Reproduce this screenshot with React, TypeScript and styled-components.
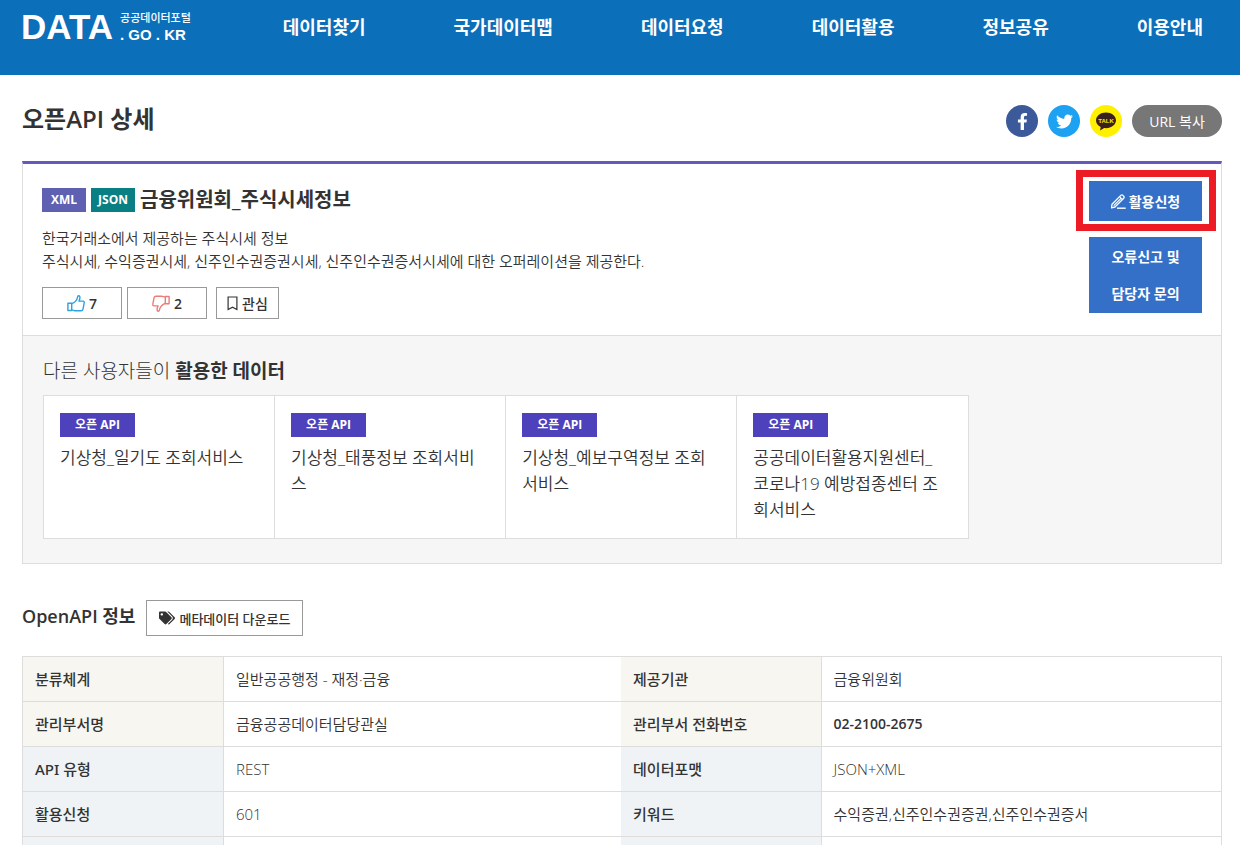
import React from "react";
import styled, { createGlobalStyle } from "styled-components";
import { FaFacebookF, FaTwitter, FaTags } from "react-icons/fa";

const GlobalStyle = createGlobalStyle`
  * { box-sizing: border-box; }
  body {
    margin: 0;
    background: #fff;
    color: #333;
    font-family: "Open Sans", "Noto Sans CJK KR", sans-serif;
    font-size: 15px;
    font-weight: 350;
  }
  h1, h2, h3, p, ul { margin: 0; padding: 0; }
  ul { list-style: none; }
  a { color: inherit; text-decoration: none; }
  button { font-family: inherit; color: inherit; padding: 0; border: 0; cursor: pointer; }
`;

const Page = styled.div`
  height: 100vh;
  overflow: hidden;
`;

const Header = styled.header`
  display: flex;
  justify-content: space-between;
  align-items: flex-start;
  height: 75px;
  padding: 0 37px 0 21px;
  background: #0c6fba;
  color: #fff;
`;

const Logo = styled.a`
  display: flex;
  gap: 7px;
  padding-top: 10px;
  font-family: "Liberation Sans", "Noto Sans CJK KR", sans-serif;
  font-weight: 700;
  white-space: nowrap;
`;

const LogoMark = styled.span`
  font-size: 35px;
  line-height: 34px;
`;

const LogoSide = styled.span`
  display: flex;
  flex-direction: column;
`;

const LogoKorean = styled.span`
  font-size: 11px;
  font-weight: 500;
  line-height: 16px;
`;

const LogoDomain = styled.span`
  font-size: 15px;
  line-height: 17px;
`;

const Nav = styled.nav`
  display: flex;
  gap: 88px;
  font-size: 18px;
  font-weight: 700;
  line-height: 26px;
  padding-top: 14px;
  white-space: nowrap;
`;

const Main = styled.main`
  padding: 0 18px 0 22px;
`;

const TitleBar = styled.div`
  display: flex;
  justify-content: space-between;
  align-items: center;
  height: 86px;
  padding-top: 6px;
`;

const PageTitle = styled.h1`
  font-size: 24px;
  font-weight: 600;
  line-height: 36px;
  padding-bottom: 4px;
`;

const Share = styled.div`
  display: flex;
  gap: 10px;
`;

const ShareButton = styled.button<{ $bg: string }>`
  display: flex;
  align-items: center;
  justify-content: center;
  width: 32px;
  height: 32px;
  border-radius: 50%;
  background: ${(p) => p.$bg};
  color: #fff;
`;

const CopyButton = styled.button`
  width: 90px;
  height: 32px;
  border-radius: 16px;
  background: #777;
  color: #fff;
  font-size: 14px;
  font-weight: 400;
`;

const Panel = styled.section`
  border: 1px solid #ddd;
  border-top: 3px solid #6459bd;
`;

const Summary = styled.div`
  display: flex;
  justify-content: space-between;
  padding: 0 19px;
  border-bottom: 1px solid #ddd;
`;

const SummaryText = styled.div`
  padding: 24px 0 16px;
`;

const NameRow = styled.div`
  display: flex;
  align-items: center;
  gap: 5px;
  height: 24px;
`;

const Format = styled.span<{ $bg: string }>`
  width: 44px;
  height: 24px;
  background: ${(p) => p.$bg};
  color: #fff;
  font-size: 12px;
  font-weight: 700;
  line-height: 23px;
  text-align: center;
`;

const Name = styled.h2`
  font-size: 20px;
  font-weight: 600;
  line-height: 24px;
`;

const Description = styled.p`
  margin: 15px 0 14px;
  line-height: 23px;
`;

const Reactions = styled.div`
  display: flex;
  gap: 9px;
`;

const Votes = styled.div`
  display: flex;
  gap: 5px;
`;

const Outlined = styled.button<{ $width: number; $tall?: boolean }>`
  display: flex;
  align-items: center;
  justify-content: center;
  gap: 4px;
  width: ${(p) => p.$width}px;
  height: ${(p) => (p.$tall ? 36 : 32)}px;
  border: 1px solid #999;
  background: #fff;
  font-size: ${(p) => (p.$tall ? 13 : 14)}px;
  font-weight: 500;
  white-space: nowrap;
`;

const Count = styled.span`
  font-weight: 600;
`;

const Actions = styled.div`
  display: flex;
  flex-direction: column;
  gap: 16px;
  width: 113px;
  padding-top: 17px;
`;

const Highlighted = styled.div`
  position: relative;
  &::after {
    content: "";
    position: absolute;
    inset: -11px -14px -10px -13px;
    border: 7px solid #ed1c24;
    pointer-events: none;
  }
`;

const ActionButton = styled.button<{ $tall?: boolean }>`
  display: flex;
  align-items: center;
  justify-content: center;
  gap: 3px;
  width: 100%;
  height: ${(p) => (p.$tall ? 76 : 40)}px;
  background: #3570c8;
  color: #fff;
  font-size: 14px;
  font-weight: 600;
  line-height: 37px;
`;

const Related = styled.div`
  padding: 22px 20px 24px;
  background: #f6f6f6;
`;

const RelatedTitle = styled.h3`
  margin-bottom: 11px;
  font-size: 19px;
  font-weight: 300;
  line-height: 26px;
  b { font-weight: 700; }
`;

const Cards = styled.ul`
  display: grid;
  grid-template-columns: repeat(4, 1fr);
  width: 80%;
  min-height: 144px;
  border: 1px solid #ddd;
  background: #fff;
`;

const Card = styled.li`
  padding: 17px 25px 15px 16px;
  border-right: 1px solid #ddd;
  &:last-child { border-right: 0; }
`;

const Tag = styled.span`
  display: block;
  width: 75px;
  height: 24px;
  margin-bottom: 8px;
  background: #4e42bc;
  color: #fff;
  font-size: 12px;
  font-weight: 700;
  line-height: 23px;
  text-align: center;
`;

const CardName = styled.a`
  display: block;
  font-size: 17px;
  line-height: 26px;
  word-break: break-all;
`;

const InfoHead = styled.div`
  display: flex;
  align-items: center;
  gap: 11px;
  margin: 36px 0 20px;
`;

const InfoTitle = styled.h3`
  padding-bottom: 4px;
  font-size: 18px;
  font-weight: 600;
  line-height: 26px;
`;

const Table = styled.table`
  width: 100%;
  table-layout: fixed;
  border-collapse: collapse;
  border: 1px solid #ddd;
`;

const Col = styled.col<{ $width?: string }>`
  width: ${(p) => p.$width ?? "auto"};
`;

const Th = styled.th<{ $tone: "warm" | "cool" }>`
  height: 45px;
  padding: 0 12px;
  border-right: 1px solid #ddd;
  border-bottom: 1px solid #ddd;
  background: ${(p) => (p.$tone === "warm" ? "#f7f6f1" : "#eff3f6")};
  font-family: "Noto Sans", "Noto Sans CJK KR", sans-serif;
  font-weight: 500;
  line-height: 24px;
  text-align: left;
`;

const Td = styled.td<{ $strong?: boolean }>`
  padding: 0 12px;
  border-bottom: 1px solid #ddd;
  font-size: ${(p) => (p.$strong ? 14 : 15)}px;
  font-weight: ${(p) => (p.$strong ? 600 : 350)};
  line-height: 24px;
`;

const TalkIcon = () => (
  <svg width="20" height="19" viewBox="0 0 20 19" aria-hidden="true">
    <path
      d="M10 0.500C4.500 .500 0 4 0 8.400c0 2.800 1.900 5.200 4.700 6.600L4 18.600l4.200-2.500c.6.1 1.200.1 1.800.1 5.500 0 10-3.500 10-7.900S15.500.500 10 .500z"
      fill="#3b1e1e"
    />
    <text x="10" y="10.800" textAnchor="middle" fill="#ffeb00" fontFamily="Liberation Sans, sans-serif" fontSize="6" fontWeight="700">
      TALK
    </text>
  </svg>
);

const Thumb = ({ down, color }: { down?: boolean; color: string }) => (
  <svg width="18" height="18" viewBox="0 0 18 18" fill="none" stroke={color} strokeWidth="1.400" strokeLinejoin="round" aria-hidden="true">
    <g transform={down ? "rotate(180 9 9.500)" : undefined}>
      <path d="M.9 9.200h3.800v7.300H.9z" />
      <path d="M4.700 9.700c2.500-1 4.900-3.100 5.600-5.600.2-.9.100-2.300 1.200-2.300 1.300 0 1.600 1.300 1.300 2.700-.2.900-.4 1.800-.8 2.600h4.100c.9 0 1.300.7 1.100 1.500l-1.200 6.600c-.2 1-.9 1.600-1.900 1.600H8.500c-1.500 0-2.300-.9-3.800-.9" />
    </g>
  </svg>
);

const Bookmark = () => (
  <svg width="11" height="16" viewBox="0 0 11 16" fill="none" stroke="#333" strokeWidth="1.200" aria-hidden="true">
    <path d="M1.100 2h8.800v12.600L5.500 12.200l-4.400 2.400z" />
  </svg>
);

const Pencil = () => (
  <svg width="15" height="15" viewBox="0 0 15 15" fill="none" stroke="#fff" strokeLinejoin="round" aria-hidden="true">
    <path d="M1 10.300 9.800 1.400c.6-.6 1.400-.6 2 0l.9.900c.6.6.6 1.400 0 2L4 13l-3.500.9z" strokeWidth="1.300" />
    <path d="M8.500 2.700l3 3M2.700 11.700l7.300-7.400" strokeWidth="1.200" />
    <path d="M6 14.200h8.700" strokeWidth="1.400" />
  </svg>
);

const menu = ["데이터찾기", "국가데이터맵", "데이터요청", "데이터활용", "정보공유", "이용안내"];

const related = [
  "기상청_일기도 조회서비스",
  "기상청_태풍정보 조회서비스",
  "기상청_예보구역정보 조회서비스",
  "공공데이터활용지원센터_코로나19 예방접종센터 조회서비스",
];

type Row = { tone: "warm" | "cool"; cells: [string, string, string, string]; phone?: boolean };

const rows: Row[] = [
  { tone: "warm", cells: ["분류체계", "일반공공행정 - 재정·금융", "제공기관", "금융위원회"] },
  { tone: "warm", cells: ["관리부서명", "금융공공데이터담당관실", "관리부서 전화번호", "02-2100-2675"], phone: true },
  { tone: "cool", cells: ["API 유형", "REST", "데이터포맷", "JSON+XML"] },
  { tone: "cool", cells: ["활용신청", "601", "키워드", "수익증권,신주인수권증권,신주인수권증서"] },
  { tone: "cool", cells: ["", "", "", ""] },
];

export default function App() {
  return (
    <Page>
      <GlobalStyle />
      <Header>
        <Logo href="#">
          <LogoMark>DATA</LogoMark>
          <LogoSide>
            <LogoKorean>공공데이터포털</LogoKorean>
            <LogoDomain>. GO . KR</LogoDomain>
          </LogoSide>
        </Logo>
        <Nav>
          {menu.map((item) => (
            <a href="#" key={item}>{item}</a>
          ))}
        </Nav>
      </Header>
      <Main>
        <TitleBar>
          <PageTitle>오픈API 상세</PageTitle>
          <Share>
            <ShareButton $bg="#3c5a99" aria-label="Facebook"><FaFacebookF size={17} /></ShareButton>
            <ShareButton $bg="#1da1f2" aria-label="Twitter"><FaTwitter size={17} /></ShareButton>
            <ShareButton $bg="#fff000" aria-label="KakaoTalk"><TalkIcon /></ShareButton>
            <CopyButton>URL 복사</CopyButton>
          </Share>
        </TitleBar>
        <Panel>
          <Summary>
            <SummaryText>
              <NameRow>
                <Format $bg="#6060b3">XML</Format>
                <Format $bg="#0a7f83">JSON</Format>
                <Name>금융위원회_주식시세정보</Name>
              </NameRow>
              <Description>
                한국거래소에서 제공하는 주식시세 정보
                <br />
                주식시세, 수익증권시세, 신주인수권증권시세, 신주인수권증서시세에 대한 오퍼레이션을 제공한다.
              </Description>
              <Reactions>
                <Votes>
                  <Outlined $width={80}><Thumb color="#2ba3df" /><Count>7</Count></Outlined>
                  <Outlined $width={80}><Thumb down color="#ee7b7b" /><Count>2</Count></Outlined>
                </Votes>
                <Outlined $width={63}><Bookmark />관심</Outlined>
              </Reactions>
            </SummaryText>
            <Actions>
              <Highlighted>
                <ActionButton><Pencil />활용신청</ActionButton>
              </Highlighted>
              <ActionButton $tall>
                오류신고 및
                <br />
                담당자 문의
              </ActionButton>
            </Actions>
          </Summary>
          <Related>
            <RelatedTitle>다른 사용자들이 <b>활용한 데이터</b></RelatedTitle>
            <Cards>
              {related.map((name) => (
                <Card key={name}>
                  <Tag>오픈 API</Tag>
                  <CardName href="#">{name}</CardName>
                </Card>
              ))}
            </Cards>
          </Related>
        </Panel>
        <InfoHead>
          <InfoTitle>OpenAPI 정보</InfoTitle>
          <Outlined $width={157} $tall><FaTags size={16} />메타데이터 다운로드</Outlined>
        </InfoHead>
        <Table>
          <colgroup>
            <Col $width="201px" />
            <Col />
            <Col $width="200px" />
            <Col $width="33.4%" />
          </colgroup>
          <tbody>
            {rows.map((row, i) => (
              <tr key={i}>
                <Th scope="row" $tone={row.tone}>{row.cells[0]}</Th>
                <Td>{row.cells[1]}</Td>
                <Th scope="row" $tone={row.tone}>{row.cells[2]}</Th>
                <Td $strong={row.phone}>{row.cells[3]}</Td>
              </tr>
            ))}
          </tbody>
        </Table>
      </Main>
    </Page>
  );
}
